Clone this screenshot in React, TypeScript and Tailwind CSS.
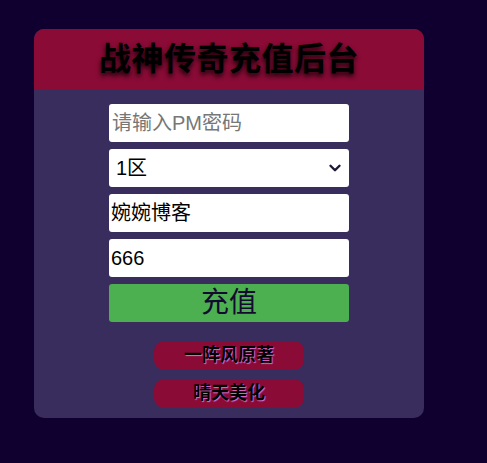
import { ChevronDown } from "lucide-react"

const font = "font-['Liberation_Sans','Noto_Sans_CJK_SC',sans-serif]"

export default function App() {
    return (
        <div className={`min-h-[463px] w-full bg-[#0f0030] pt-[29px] pl-[34px] ${font}`}>
            <div className="w-[390px] rounded-[10px] overflow-hidden bg-[#392d5d]">
                {/* Header */}
                <div className="h-[60px] bg-[#8a0b36] flex items-center justify-center">
                    <h1 className="text-[32px] font-bold text-black tracking-[0.5px] [text-shadow:0_3px_5px_rgba(0,0,0,0.85)]">
                        战神传奇充值后台
                    </h1>
                </div>

                {/* Form */}
                <div className="flex flex-col items-center pt-[15px] pb-[10px]">
                    <div className="flex flex-col gap-[7px]">
                        <input
                            className="w-[240px] h-[38px] bg-white rounded-[3px] px-[3px] text-[20px] text-black placeholder:text-[#777] outline-none"
                            placeholder="请输入PM密码"
                        />
                        <div className="relative w-[240px] h-[38px] bg-white rounded-[3px] flex items-center pl-[7px] text-[20px] text-black">
                            <span>1区</span>
                            <ChevronDown className="absolute right-[5px] top-[10px] w-[18px] h-[18px] text-[#1d1a38]" strokeWidth={3.2} />
                        </div>
                        <div className="w-[240px] h-[38px] bg-white rounded-[3px] flex items-center px-[2px] text-[20px] text-black">
                            婉婉博客
                        </div>
                        <div className="w-[240px] h-[38px] bg-white rounded-[3px] flex items-center px-[2px] text-[20px] text-black">
                            666
                        </div>
                        <button className="w-[240px] h-[38px] bg-[#4caf50] rounded-[3px] flex items-center justify-center text-[28px] text-[#140a30]">
                            充值
                        </button>
                    </div>

                    <div className="flex flex-col gap-[9px] mt-[19px]">
                        <a className="w-[150px] h-[29px] rounded-[10px] bg-[#8a0b36] flex items-center justify-center text-[18px] font-bold text-black [text-shadow:1px_1px_1px_#e070d0]">
                            一阵风原著
                        </a>
                        <a className="w-[150px] h-[29px] rounded-[10px] bg-[#8a0b36] flex items-center justify-center text-[18px] font-bold text-black [text-shadow:1px_1px_1px_#e070d0]">
                            晴天美化
                        </a>
                    </div>
                </div>
            </div>
        </div>
    )
}
